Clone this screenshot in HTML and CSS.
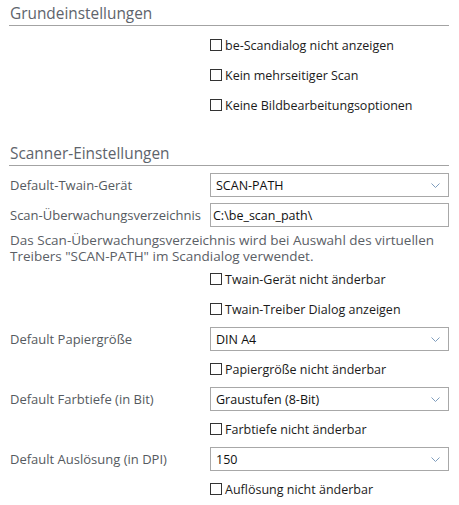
FILE: index.html
```html
<!DOCTYPE html>
<html lang="de">
<head>
<meta charset="utf-8">
<title>Scanner-Einstellungen</title>
<link rel="stylesheet" href="styles.css">
</head>
<body>
<div class="page">
  <h2 class="section-title">Grundeinstellungen</h2>
  <div class="form">
    <div class="row"><span class="label"></span><label class="check"><span class="box"></span>be-Scandialog nicht anzeigen</label></div>
    <div class="row"><span class="label"></span><label class="check"><span class="box"></span>Kein mehrseitiger Scan</label></div>
    <div class="row"><span class="label"></span><label class="check"><span class="box"></span>Keine Bildbearbeitungsoptionen</label></div>
  </div>

  <h2 class="section-title second">Scanner-Einstellungen</h2>
  <div class="form">
    <div class="row"><span class="label">Default-Twain-Gerät</span>
      <div class="select"><span class="value caps">SCAN-PATH</span><svg class="chev" width="9" height="5" viewBox="0 0 9 5"><path d="M0.5 0.5 L4.5 4.5 L8.5 0.5" fill="none" stroke="#7f9dbd" stroke-width="1"/></svg></div>
    </div>
    <div class="row"><span class="label">Scan-Überwachungsverzeichnis</span>
      <div class="input">C:\be_scan_path\</div>
    </div>
    <p class="note">Das Scan-Überwachungsverzeichnis wird bei Auswahl des virtuellen Treibers "SCAN-PATH" im Scandialog verwendet.</p>
    <div class="row"><span class="label"></span><label class="check"><span class="box"></span>Twain-Gerät nicht änderbar</label></div>
    <div class="row"><span class="label"></span><label class="check"><span class="box"></span>Twain-Treiber Dialog anzeigen</label></div>
    <div class="row"><span class="label">Default Papiergröße</span>
      <div class="select"><span class="value caps">DIN A4</span><svg class="chev" width="9" height="5" viewBox="0 0 9 5"><path d="M0.5 0.5 L4.5 4.5 L8.5 0.5" fill="none" stroke="#7f9dbd" stroke-width="1"/></svg></div>
    </div>
    <div class="row"><span class="label"></span><label class="check"><span class="box"></span>Papiergröße nicht änderbar</label></div>
    <div class="row"><span class="label">Default Farbtiefe (in Bit)</span>
      <div class="select"><span class="value">Graustufen (8-Bit)</span><svg class="chev" width="9" height="5" viewBox="0 0 9 5"><path d="M0.5 0.5 L4.5 4.5 L8.5 0.5" fill="none" stroke="#7f9dbd" stroke-width="1"/></svg></div>
    </div>
    <div class="row"><span class="label"></span><label class="check"><span class="box"></span>Farbtiefe nicht änderbar</label></div>
    <div class="row"><span class="label">Default Auslösung (in DPI)</span>
      <div class="select"><span class="value">150</span><svg class="chev" width="9" height="5" viewBox="0 0 9 5"><path d="M0.5 0.5 L4.5 4.5 L8.5 0.5" fill="none" stroke="#7f9dbd" stroke-width="1"/></svg></div>
    </div>
    <div class="row"><span class="label"></span><label class="check"><span class="box"></span>Auflösung nicht änderbar</label></div>
  </div>
</div>
</body>
</html>
```

FILE: styles.css
```css
html, body {
  margin: 0;
  padding: 0;
  background: #ffffff;
}

body {
  font-family: "Open Sans", "Noto Sans", "Liberation Sans", sans-serif;
  font-size: 12px;
  color: #1a1a1a;
}

.page {
  padding: 0 10px 0 9px;
  width: 440px;
}

.section-title {
  margin: 0;
  padding: 3px 0 0 1px;
  height: 22px;
  line-height: 22px;
  font-size: 15.4px;
  font-weight: 400;
  color: #5e646c;
  border-bottom: 1px solid #a3a3a3;
}

.section-title.second {
  margin-top: 20px;
}

.form {
  display: flex;
  flex-direction: column;
  padding-top: 4px;
}

.row {
  display: flex;
  align-items: center;
  height: 30px;
}

.label {
  width: 200px;
  flex: none;
  padding-left: 1px;
  color: #555a60;
  font-size: 13px;
}

.check {
  display: flex;
  align-items: center;
  gap: 3px;
  font-size: 12.5px;
  color: #1b1b1b;
}

.box {
  width: 10px;
  height: 10px;
  border: 1px solid #333333;
  background: #ffffff;
  flex: none;
}

.select, .input {
  box-sizing: border-box;
  width: 239px;
  height: 24px;
  border: 1px solid #a8a8a8;
  background: #ffffff;
  display: flex;
  align-items: center;
  font-size: 12.5px;
  color: #111111;
}

.select {
  justify-content: space-between;
  padding: 0 8px 0 5px;
}

.input {
  padding-left: 2px;
}

.chev {
  display: block;
}

.note {
  margin: 2px 0 0 1px;
  line-height: 16px;
  font-size: 13.5px;
  color: #5b6066;
}
```
